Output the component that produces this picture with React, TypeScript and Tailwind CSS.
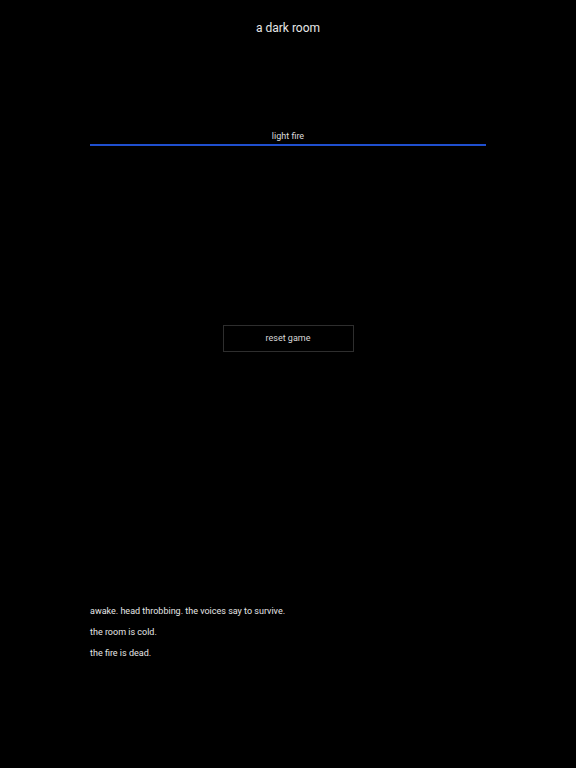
import React from 'react';

const log = [
  'awake. head throbbing. the voices say to survive.',
  'the room is cold.',
  'the fire is dead.',
];

export default function App() {
  return (
    <div className="flex h-[768px] w-[576px] flex-col bg-black text-[#e6e6e6] font-['Roboto','Noto_Sans',sans-serif]">
      <header className="pt-[20px] text-center text-[12px] leading-4">a dark room</header>

      <div className="mx-[90px] mt-[94px] flex flex-col items-center">
        <button className="text-[9px] leading-3 text-[#dcdcdc]">light fire</button>
        <div className="mt-[2px] h-[2px] w-full bg-[#1f4fcf]" />
      </div>

      <div className="mt-[179px] flex justify-center">
        <button className="h-[27px] w-[131px] border border-[#2e2e2e] text-[9px] text-[#d8d8d8]">
          reset game
        </button>
      </div>

      <ul className="mx-[90px] mt-[253px] flex flex-col gap-[9px] text-[9px] leading-3 text-[#e6e6e6]">
        {log.map((line, i) => (
          <li key={i}>{line}</li>
        ))}
      </ul>
    </div>
  );
}
